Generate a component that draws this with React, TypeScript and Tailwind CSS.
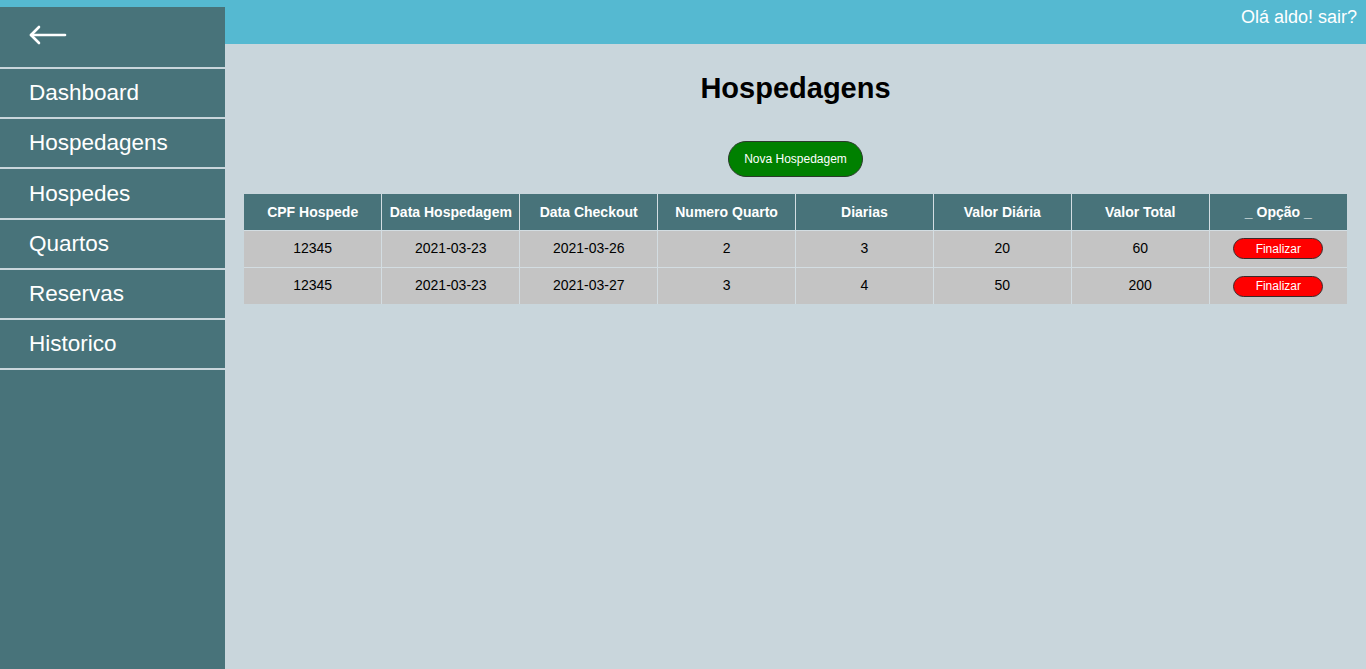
const menu = ['Dashboard', 'Hospedagens', 'Hospedes', 'Quartos', 'Reservas', 'Historico']

const cols = [
  'CPF Hospede',
  'Data Hospedagem',
  'Data Checkout',
  'Numero Quarto',
  'Diarias',
  'Valor Diária',
  'Valor Total',
  '_ Opção _',
]

const rows = [
  { cpf: '12345', entrada: '2021-03-23', saida: '2021-03-26', quarto: '2', diarias: '3', diaria: '20', total: '60' },
  { cpf: '12345', entrada: '2021-03-23', saida: '2021-03-27', quarto: '3', diarias: '4', diaria: '50', total: '200' },
]

const td = 'border-l border-t border-[#d3dde2] first:border-l-0'

export default function App() {
  return (
    <div
      className="relative min-h-[669px] bg-[#c9d6dc] text-black"
      style={{ fontFamily: '"Liberation Sans", Arial, sans-serif' }}
    >
      {/* Topo */}
      <header className="h-[44px] bg-[#55b9d1] flex items-start justify-end pr-[9px] pt-[6px]">
        <span className="text-white text-[18px] leading-[22px]">Olá aldo! sair?</span>
      </header>

      {/* Menu lateral */}
      <aside className="absolute left-0 top-[7px] bottom-0 w-[225px] bg-[#48737a]">
        <div className="h-[62px] border-b-2 border-[#c9d6dc] flex items-center pl-[29px] pb-[4px]">
          <svg width="38" height="20" viewBox="0 0 38 20" fill="none" stroke="white" strokeWidth="2.6" strokeLinecap="round" strokeLinejoin="round">
            <path d="M2 10 H36" />
            <path d="M10 2 L2 10 L10 18" />
          </svg>
        </div>
        {menu.map((m) => (
          <div
            key={m}
            className="h-[50.2px] border-b-2 border-[#c9d6dc] flex items-center pl-[29px] text-white text-[22.5px]"
          >
            {m}
          </div>
        ))}
      </aside>

      {/* Conteúdo */}
      <main className="ml-[225px] px-[19px] pt-[27px] flex flex-col items-center">
        <h1 className="text-[29px] leading-[34px] font-bold">Hospedagens</h1>
        <button className="mt-[36px] w-[135px] h-[36px] rounded-full bg-[#008000] border border-[#2b3a2b] text-white text-[12px]">
          Nova Hospedagem
        </button>

        <table className="mt-[17px] w-full border-collapse text-[14px] table-fixed">
          <thead>
            <tr className="bg-[#48737a] text-white h-[36px]">
              {cols.map((c) => (
                <th key={c} className="border-l border-[#d3dde2] first:border-l-0 font-bold px-1 pt-[1px]">
                  {c}
                </th>
              ))}
            </tr>
          </thead>
          <tbody>
            {rows.map((r, i) => (
              <tr key={i} className="bg-[#c4c4c4] h-[37px] text-center">
                <td className={td}>{r.cpf}</td>
                <td className={td}>{r.entrada}</td>
                <td className={td}>{r.saida}</td>
                <td className={td}>{r.quarto}</td>
                <td className={td}>{r.diarias}</td>
                <td className={td}>{r.diaria}</td>
                <td className={td}>{r.total}</td>
                <td className={td}>
                  <button className="w-[90px] h-[21px] rounded-full bg-[#ff0000] border border-[#3a2a2a] text-white text-[12px] leading-none">
                    Finalizar
                  </button>
                </td>
              </tr>
            ))}
          </tbody>
        </table>
      </main>
    </div>
  )
}
